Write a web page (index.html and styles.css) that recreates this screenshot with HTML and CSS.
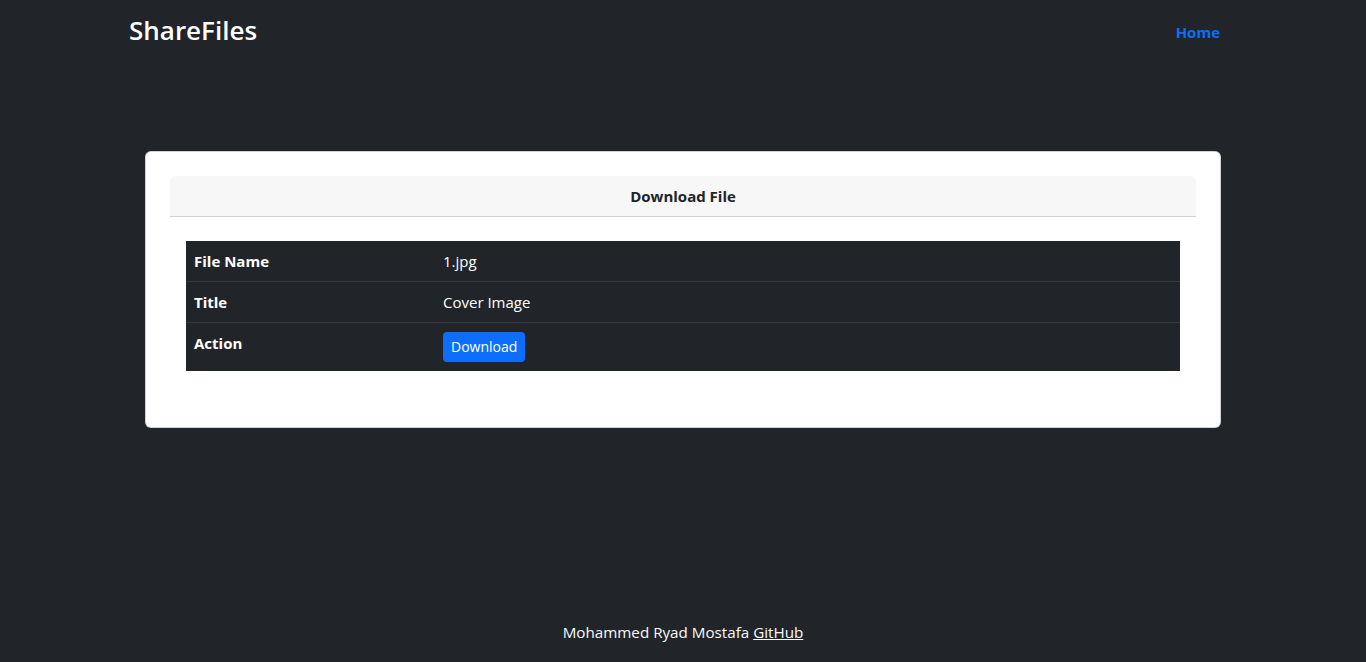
FILE: index.html
```html
<!DOCTYPE html>
<html lang="en">
<head>
<meta charset="utf-8">
<title>ShareFiles</title>
<link rel="stylesheet" href="styles.css">
</head>
<body>
<div class="page">
  <nav class="navbar">
    <div class="container nav-inner">
      <a class="brand" href="#">ShareFiles</a>
      <a class="nav-link" href="#">Home</a>
    </div>
  </nav>
  <main class="main">
    <div class="card">
      <div class="card-body">
        <div class="card-header">Download File</div>
        <div class="table-wrap">
          <table class="table">
            <tbody>
              <tr><th>File Name</th><td>1.jpg</td></tr>
              <tr><th>Title</th><td>Cover Image</td></tr>
              <tr><th>Action</th><td><a class="btn" href="#">Download</a></td></tr>
            </tbody>
          </table>
        </div>
      </div>
    </div>
  </main>
  <footer class="footer">Mohammed Ryad Mostafa <a href="#">GitHub</a></footer>
</div>
</body>
</html>
```
FILE: styles.css
```css
* { box-sizing: border-box; }
html, body { margin: 0; padding: 0; }
body {
  background: #212529;
  color: #dee2e6;
  font-family: "Open Sans", "Noto Sans", sans-serif;
  font-size: 16px;
  line-height: 1.5;
}
.page {
  min-height: 100vh;
  display: flex;
  flex-direction: column;
}
.container {
  width: 1140px;
  margin: 0 auto;
  padding: 0 12px;
}
.navbar { padding: 10px 0 0; }
.nav-inner {
  display: flex;
  align-items: center;
  justify-content: space-between;
  padding-left: 16px;
  padding-right: 33px;
}
.brand {
  color: #fff;
  text-decoration: none;
  font-size: 26px;
  font-weight: 600;
  line-height: 40px;
}
.nav-link {
  color: #0d6efd;
  text-decoration: none;
  font-weight: 700;
  font-size: 15px;
  margin-top: 4px;
}
.main {
  flex: 1;
  padding-top: 101px;
}
.card {
  width: 1076px;
  margin: 0 0 0 145px;
  background: #fff;
  border: 1px solid rgba(0,0,0,.175);
  border-radius: 6px;
}
.card-body { padding: 24px 24px 56px; }
.card-header {
  background: #f7f7f7;
  border-bottom: 1px solid #d1d1d1;
  border-radius: 6px 6px 0 0;
  text-align: center;
  color: #212529;
  font-weight: 700;
  font-size: 15px;
  height: 41px;
  line-height: 40px;
}
.table-wrap { padding: 24px 16px 0; }
.table {
  width: 100%;
  border-collapse: collapse;
  background: #212529;
  color: #fff;
}
.table th, .table td {
  text-align: left;
  vertical-align: top;
  padding: 8px;
  line-height: 24px;
  border-bottom: 1px solid #373b3e;
}
.table tr:last-child th, .table tr:last-child td { border-bottom: none; padding-bottom: 9px; }
.table th { width: 257px; font-weight: 700; font-size: 15px; }
.table td { font-size: 15px; }
.table th + td { padding-left: 0; }
.btn {
  display: inline-block;
  background: #0d6efd;
  color: #fff;
  text-decoration: none;
  font-size: 14px;
  line-height: 22px;
  padding: 4px 8px;
  border-radius: 4px;
  margin-top: 1px;
  vertical-align: top;
}
.footer {
  text-align: center;
  color: #f8f9fa;
  font-size: 15.2px;
  padding: 0 0 18px;
}
.footer a { color: #f8f9fa; }
```
